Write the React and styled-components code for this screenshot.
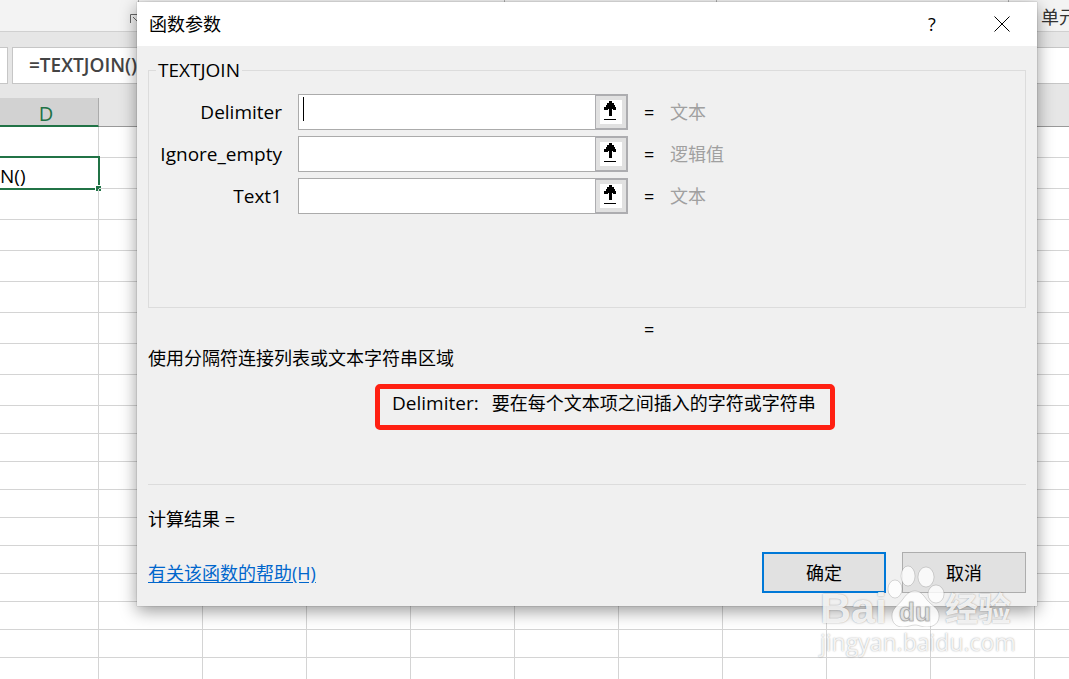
import * as React from "react";
import styled, { createGlobalStyle } from "styled-components";

const GlobalStyle = createGlobalStyle`
  * {
    box-sizing: border-box;
  }
  body {
    margin: 0;
    font-family: "Open Sans", "Noto Sans CJK SC", sans-serif;
    font-size: 18px;
    line-height: 24px;
    color: #000;
  }
  input, button {
    font: inherit;
    color: inherit;
  }
`;

const Workbook = styled.div`
  position: relative;
  display: flex;
  flex-direction: column;
  height: 100vh;
  overflow: hidden;
  background-color: #fff;
`;

const Ribbon = styled.div`
  display: flex;
  height: 32px;
  flex-shrink: 0;
  background-color: #f3f3f3;
  border-bottom: 1px solid #d0d0d0;
`;
const RibbonGroup = styled.div`
  display: flex;
  justify-content: flex-end;
  align-items: center;
  flex: 0 0 ${(props) => props.$width}px;
  border-right: 1px solid #b0b0b0;
  padding-top: 6px;
`;
const RibbonLabel = styled.div`
  flex: 1;
  padding: 5px 0 0 32px;
  white-space: nowrap;
  overflow: hidden;
  color: #333;
`;

const FormulaBar = styled.div`
  display: flex;
  gap: 4px;
  flex-shrink: 0;
  padding: 15px 0 14px;
  background-color: #e6e6e6;
`;
const NameBox = styled.div`
  width: 8px;
  border: 1px solid #c6c6c6;
  border-left: none;
  background-color: #fff;
`;
const FormulaInput = styled.input`
  flex: 1;
  height: 37px;
  padding: 0 16px 2px;
  border: 1px solid #c6c6c6;
  border-right: none;
  outline: none;
  background-color: #fff;
  font-size: 19px;
  font-weight: 600;
  color: #444;
`;

const SheetArea = styled.div`
  flex: 1;
  overflow: hidden;
`;
const Sheet = styled.table`
  width: 1139px;
  table-layout: fixed;
  border-collapse: separate;
  border-spacing: 0;
`;
const ColumnHead = styled.th`
  width: ${(props) => (props.$selected ? 99 : 104)}px;
  height: 29px;
  padding: 4px 6px 0 0;
  border-right: 1px solid #ababab;
  border-bottom: 1px solid #999;
  background-color: #e6e6e6;
  font-size: 20px;
  font-weight: 400;
  line-height: 22px;
  ${(props) =>
    props.$selected &&
    `
    border-bottom: 2px solid #217346;
    background-color: #d2d2d2;
    color: #217346;
  `}
`;
const Cell = styled.td`
  position: relative;
  height: ${(props) => props.$height}px;
  padding: 0;
  border-right: 1px solid #d4d4d4;
  border-bottom: 1px solid #d4d4d4;
`;
const Selection = styled.div`
  position: absolute;
  inset: -2px -2px -2px 0;
  padding-top: 6px;
  border: 2px solid #217346;
  border-left: none;
  font-size: 19px;

  &::after {
    content: "";
    position: absolute;
    right: -3px;
    bottom: -3px;
    width: 5px;
    height: 5px;
    border-top: 1px solid #fff;
    border-left: 1px solid #fff;
    background-color: #217346;
  }
`;

const Dialog = styled.form`
  position: absolute;
  top: 2px;
  left: 137px;
  right: 32px;
  background-color: #f0f0f0;
  box-shadow: 0 0 1px rgba(0, 0, 0, 0.4), 0 5px 16px rgba(0, 0, 0, 0.4);
`;
const TitleBar = styled.div`
  display: flex;
  align-items: center;
  height: 44px;
  padding-left: 12px;
  background-color: #fff;
`;
const Title = styled.div`
  flex: 1;
`;
const TitleButton = styled.button`
  display: flex;
  justify-content: center;
  align-items: center;
  width: 70px;
  height: 44px;
  padding: 0;
  border: none;
  background: none;
`;
const DialogBody = styled.div`
  padding: 12px 11px 13px;
`;
const Arguments = styled.fieldset`
  display: block;
  min-height: 250px;
  margin: 0;
  padding: 12px 0 0;
  border: 1px solid #dcdcdc;
`;
const FunctionName = styled.legend`
  margin-left: 7px;
  padding: 0 2px;
  font-size: 19px;
`;
const ArgumentRow = styled.div`
  display: grid;
  grid-template-columns: 133px 330px 10px 1fr;
  column-gap: 16px;
  align-items: center;
  height: 36px;
  margin-bottom: 6px;
`;
const ArgumentLabel = styled.label`
  font-size: 19px;
  text-align: right;
`;
const RefEdit = styled.div`
  display: flex;
  height: 36px;
`;
const RefInput = styled.input`
  flex: 1;
  min-width: 0;
  padding: 0 4px;
  border: 1px solid #ababab;
  border-right: none;
  outline: none;
  background: #fff;
  ${(props) =>
    props.$active &&
    `
    background: linear-gradient(#000, #000) 4px 2px / 1px 24px no-repeat #fff;
  `}
`;
const RefButton = styled.button`
  display: flex;
  justify-content: center;
  align-items: center;
  width: 33px;
  padding: 0;
  border: 2px solid #adadb0;
  border-left-width: 1px;
  background-color: #e1e1e1;
`;
const ArgumentType = styled.span`
  color: #a0a0a0;
`;
const FormulaResult = styled.div`
  margin-top: 9px;
  padding-left: 496px;
`;
const Description = styled.div`
  margin-top: 5px;
`;
const ArgumentHelp = styled.div`
  display: flex;
  gap: 13px;
  width: fit-content;
  min-width: 460px;
  height: 46px;
  margin: 14px 0 0 227px;
  padding: 2px 12px;
  border: 5px solid #ff2012;
  border-radius: 5px;
`;
const ArgumentName = styled.span`
  font-size: 19px;
`;
const Result = styled.div`
  margin-top: 54px;
  padding-top: 22px;
  border-top: 1px solid #dcdcdc;
`;
const Footer = styled.div`
  display: flex;
  align-items: center;
  gap: 16px;
  margin-top: 21px;
`;
const HelpLink = styled.a`
  margin-right: auto;
  color: #0066cc;
  text-underline-offset: 2px;
`;
const DialogButton = styled.button`
  width: 124px;
  height: 41px;
  padding: 0;
  border: ${(props) => (props.$primary ? "2px solid #0078d7" : "1px solid #adadad")};
  background-color: #e1e1e1;
`;

const Watermark = styled.div`
  position: absolute;
  right: 57px;
  bottom: 22px;
  width: 192px;
  color: rgba(255, 255, 255, 0.85);
  pointer-events: none;
  text-shadow: 0 0 2px rgba(0, 0, 0, 0.25), 0 0 1px rgba(0, 0, 0, 0.15);
`;
const WatermarkBrand = styled.div`
  display: flex;
  align-items: flex-end;
  height: 64px;
  font-family: "Liberation Sans", "Noto Sans CJK SC", sans-serif;
  font-size: 43px;
  font-weight: 700;
  line-height: 38px;
`;
const WatermarkProduct = styled.span`
  font-size: 33px;
  line-height: 34px;
`;
const WatermarkSite = styled.div`
  font-size: 23px;
  line-height: 30px;
`;

const columns = ["D", "", "", "", "", "", "", "", "", "", ""];
const rows = [31, 31, 31, 31, 31, 31, 31, 31, 31, 28, 28, 28, 28, 28, 28, 28, 28, 28, 28];

const args = [
  { name: "Delimiter", type: "文本" },
  { name: "Ignore_empty", type: "逻辑值" },
  { name: "Text1", type: "文本" }
];

function LauncherIcon() {
  return (
    <svg width="9" height="12" viewBox="0 0 9 12" fill="none" stroke="#666">
      <path d="M1.5 10V1.5H9M4 4l5 5" />
    </svg>
  );
}

function CollapseIcon() {
  return (
    <svg width="22" height="24" viewBox="0 0 22 24" shapeRendering="crispEdges">
      <rect width="22" height="24" fill="#fff" />
      <path d="M9 1h3v2h2v2h1v2h1v3h-3V9h-1v7H9V9H8v1H4V7h2V5h1V3h2z" />
      <rect x="4" y="19" width="12" height="1" />
    </svg>
  );
}

function CloseIcon() {
  return (
    <svg width="16" height="16" viewBox="0 0 16 16" stroke="#000">
      <path d="M0.5 0.5l15 15M15.5 0.5l-15 15" />
    </svg>
  );
}

function Paw() {
  return (
    <svg
      width="58"
      height="64"
      viewBox="0 0 58 64"
      fill="#fff"
      fillOpacity="0.8"
      stroke="#000"
      strokeOpacity="0.14"
    >
      <ellipse cx="8" cy="26" rx="7" ry="9" />
      <ellipse cx="21" cy="13" rx="7" ry="10" />
      <ellipse cx="39" cy="14" rx="8" ry="10" />
      <ellipse cx="49" cy="31" rx="8" ry="9" />
      <path d="M28 28c6 0 9 5 12 9 5 6 12 8 12 16 0 7-5 11-12 11-6 0-8-2-12-2s-7 2-12 2C9 64 5 60 5 53c0-8 7-11 11-17 3-4 6-8 12-8z" />
      <text
        x="28"
        y="58"
        textAnchor="middle"
        fontFamily="Liberation Sans, sans-serif"
        fontSize="26"
        fontWeight="700"
        fill="#f0f0f0"
        strokeOpacity="0.2"
      >
        du
      </text>
    </svg>
  );
}

function Spreadsheet() {
  return (
    <SheetArea>
      <Sheet>
        <thead>
          <tr>
            {columns.map((column, index) => (
              <ColumnHead key={index} $selected={index === 0}>
                {column}
              </ColumnHead>
            ))}
          </tr>
        </thead>
        <tbody>
          {rows.map((height, row) => (
            <tr key={row}>
              {columns.map((column, index) => (
                <Cell key={index} $height={height}>
                  {row === 1 && index === 0 && <Selection>N()</Selection>}
                </Cell>
              ))}
            </tr>
          ))}
        </tbody>
      </Sheet>
    </SheetArea>
  );
}

function FunctionDialog() {
  return (
    <Dialog onSubmit={(e) => e.preventDefault()}>
      <TitleBar>
        <Title>函数参数</Title>
        <TitleButton type="button">?</TitleButton>
        <TitleButton type="button" aria-label="关闭">
          <CloseIcon />
        </TitleButton>
      </TitleBar>
      <DialogBody>
        <Arguments>
          <FunctionName>TEXTJOIN</FunctionName>
          {args.map((arg, index) => (
            <ArgumentRow key={arg.name}>
              <ArgumentLabel htmlFor={arg.name}>{arg.name}</ArgumentLabel>
              <RefEdit>
                <RefInput id={arg.name} type="text" $active={index === 0} />
                <RefButton type="button" aria-label={arg.name}>
                  <CollapseIcon />
                </RefButton>
              </RefEdit>
              <span>=</span>
              <ArgumentType>{arg.type}</ArgumentType>
            </ArgumentRow>
          ))}
        </Arguments>
        <FormulaResult>=</FormulaResult>
        <Description>使用分隔符连接列表或文本字符串区域</Description>
        <ArgumentHelp>
          <ArgumentName>Delimiter:</ArgumentName>
          <span>要在每个文本项之间插入的字符或字符串</span>
        </ArgumentHelp>
        <Result>计算结果 =</Result>
        <Footer>
          <HelpLink href="#help">有关该函数的帮助(H)</HelpLink>
          <DialogButton type="submit" $primary>
            确定
          </DialogButton>
          <DialogButton type="button">取消</DialogButton>
        </Footer>
      </DialogBody>
    </Dialog>
  );
}

export default function App() {
  return (
    <Workbook>
      <GlobalStyle />
      <Ribbon>
        <RibbonGroup $width={139}>
          <LauncherIcon />
        </RibbonGroup>
        <RibbonGroup $width={366} />
        <RibbonGroup $width={212} />
        <RibbonGroup $width={292} />
        <RibbonLabel>单元</RibbonLabel>
      </Ribbon>
      <FormulaBar>
        <NameBox />
        <FormulaInput type="text" aria-label="编辑栏" defaultValue="=TEXTJOIN()" />
      </FormulaBar>
      <Spreadsheet />
      <FunctionDialog />
      <Watermark>
        <WatermarkBrand>
          <span>Bai</span>
          <Paw />
          <WatermarkProduct>经验</WatermarkProduct>
        </WatermarkBrand>
        <WatermarkSite>jingyan.baidu.com</WatermarkSite>
      </Watermark>
    </Workbook>
  );
}
